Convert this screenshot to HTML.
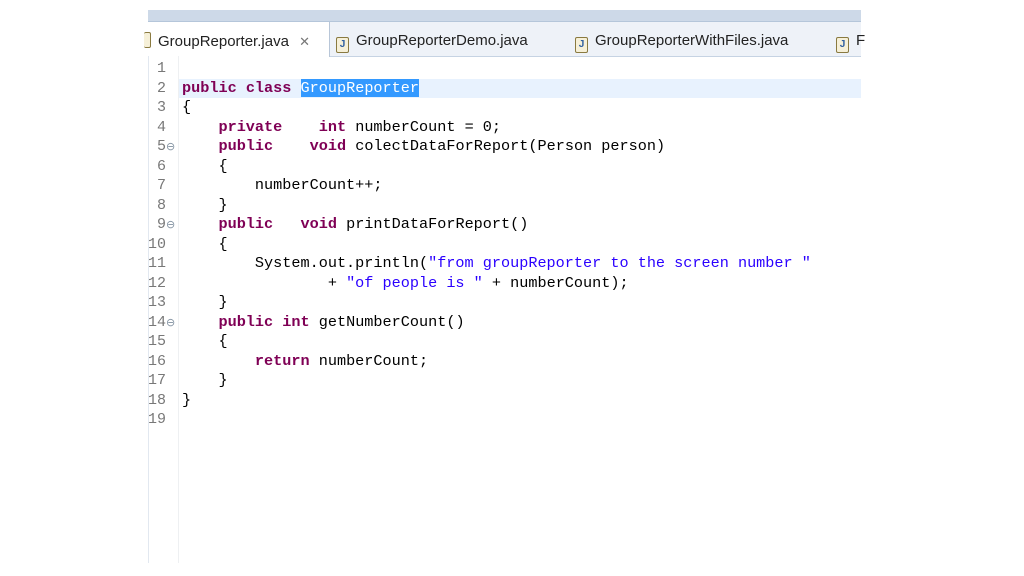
<!DOCTYPE html>
<html><head><style>
body{margin:0;width:1024px;height:576px;background:#fff;position:relative;overflow:hidden;font-family:"Liberation Sans",sans-serif}
.top{position:absolute;left:148px;top:10px;width:713px;height:11px;background:#cdd9e8;border-bottom:1px solid #b5c6da}
.tabs{position:absolute;left:148px;top:22px;width:713px;height:34px;background:#eef2f8;border-bottom:1px solid #c6d3e3}
.tab{position:absolute;top:10px;font-size:15px;color:#222;white-space:nowrap}
.active{position:absolute;left:0;top:0;width:181px;height:35px;background:#fff;border-right:1px solid #b8c6d8}
.ic{display:inline-block;width:11px;height:14px;border:1px solid #8a7a40;border-radius:2px;background:#f6f0d8;font-size:10px;line-height:14px;text-align:center;color:#3060a0;vertical-align:-2px;margin-right:7px;font-weight:bold}
.edge{position:absolute;left:148px;top:56px;width:1px;height:507px;background:#e2e8f0}
.gut{position:absolute;left:178px;top:56px;width:1px;height:507px;background:#eef0f2}
.hl{position:absolute;left:179px;top:79px;width:682px;height:19px;background:#e8f2fe}
.ln{position:absolute;left:140px;top:59px;width:26px;text-align:right;font:15px/19.5px "Liberation Mono",monospace;color:#787878;white-space:pre}
.fm{position:absolute;left:166px;font:11px "DejaVu Sans",sans-serif;color:#8090a0}
.code{position:absolute;left:182px;top:59px;font:15.2px/19.5px "Liberation Mono",monospace;color:#000;white-space:pre}
.k{color:#7f0055;font-weight:bold}
.s{color:#2a00ff}
.sel{background:#3399ff;color:#fff}
</style></head><body>
<div class="top"></div>
<div class="tabs">
<div class="active"></div>
<div class="tab" style="left:-4px"><span class="ic" style="border-left:none;width:6px"></span>GroupReporter.java <span style="color:#777;font-size:13px;margin-left:6px">✕</span></div>
<div class="tab" style="left:188px"><span class="ic">J</span>GroupReporterDemo.java</div>
<div class="tab" style="left:427px"><span class="ic">J</span>GroupReporterWithFiles.java</div>
<div class="tab" style="left:688px"><span class="ic">J</span>F</div>
</div>
<div class="edge"></div><div class="gut"></div><div class="hl"></div>
<div class="ln">1
2
3
4
5
6
7
8
9
10
11
12
13
14
15
16
17
18
19</div>
<div class="fm" style="top:140px">⊖</div>
<div class="fm" style="top:218px">⊖</div>
<div class="fm" style="top:316px">⊖</div>
<div class="code">
<span class="k">public</span> <span class="k">class</span> <span class="sel">GroupReporter</span>
{
    <span class="k">private</span>    <span class="k">int</span> numberCount = 0;
    <span class="k">public</span>    <span class="k">void</span> colectDataForReport(Person person)
    {
        numberCount++;
    }
    <span class="k">public</span>   <span class="k">void</span> printDataForReport()
    {
        System.out.println(<span class="s">"from groupReporter to the screen number "</span>
                + <span class="s">"of people is "</span> + numberCount);
    }
    <span class="k">public</span> <span class="k">int</span> getNumberCount()
    {
        <span class="k">return</span> numberCount;
    }
}
</div>
</body></html>
